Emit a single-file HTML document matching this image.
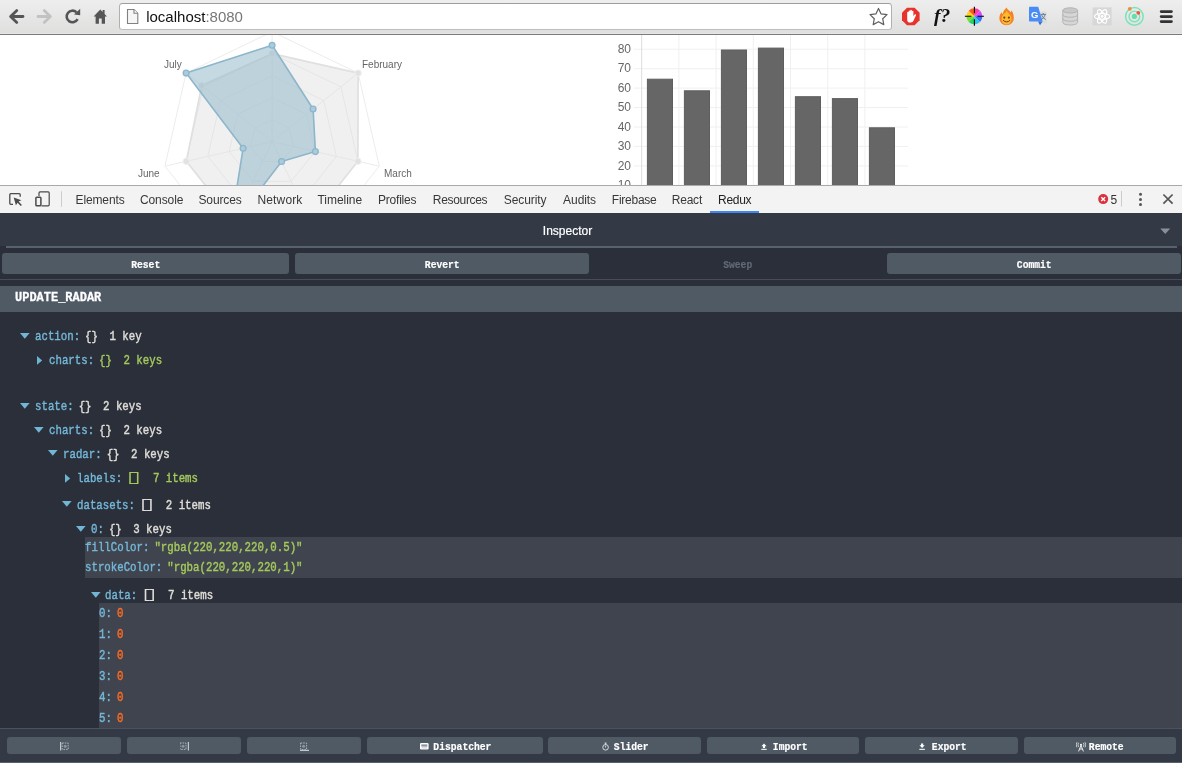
<!DOCTYPE html>
<html lang="en">
<head>
<meta charset="utf-8">
<title>localhost:8080</title>
<style>
html,body{margin:0;padding:0;}
body{width:1182px;height:763px;overflow:hidden;background:#fff;position:relative;font-family:"Liberation Sans",sans-serif;}
.abs{position:absolute;}
#tbg{position:absolute;left:0;top:0;width:1182px;height:33px;background:linear-gradient(#eeeeee,#dfdfde);border-bottom:1px solid #e6e6e6;box-shadow:0 1px 0 #7b7b7b;}
#toolbar{position:absolute;left:0;top:0;width:1182px;height:34px;will-change:transform;}
#urlbox{position:absolute;left:119px;top:3px;width:771px;height:25px;border:1px solid #b0b0b0;border-top-color:#9e9e9e;border-bottom-color:#bdbdbd;border-radius:3.5px;background:#fff;box-sizing:content-box;}
#url{position:absolute;left:146.2px;top:8px;font-size:15px;line-height:18px;color:#111;white-space:nowrap;}
#url span{color:#777;}
#page{position:absolute;left:0;top:35px;width:1182px;height:150px;overflow:hidden;will-change:transform;}
#dbg{position:absolute;left:0;top:185px;width:1182px;height:27px;background:#f3f3f3;border-top:1px solid #a9a9a9;}
#dtbar{position:absolute;left:0;top:186px;width:1182px;height:27px;will-change:transform;}
#dtbar .tab{position:absolute;top:7px;font-size:12px;line-height:14px;color:#383838;white-space:nowrap;}
#dtbar .tab.sel{color:#222;}
#redux{position:absolute;left:0;top:213px;width:1182px;height:550px;overflow:hidden;will-change:transform;}
#rbg{position:absolute;left:0;top:213px;width:1182px;height:550px;background:#2a2f3a;}
.mono{font-family:"Liberation Mono",monospace;white-space:pre;}
#insp{position:absolute;left:0;top:0;width:1182px;height:33px;background:#333a45;}
#insp .ttl{position:absolute;left:0;width:1135px;top:10.6px;text-align:center;font-size:12px;line-height:14px;color:#fff;-webkit-text-stroke:0.2px;}
#insp .ul{position:absolute;left:6px;top:33.2px;width:1171px;height:1.6px;background:#58616e;}
.btn{position:absolute;background:#4f5a65;border-radius:3px;text-align:center;color:#fff;overflow:hidden;}
.btn .t{-webkit-text-stroke:0.2px;top:-0.8px;display:inline-block;font-family:"Liberation Mono",monospace;font-weight:bold;white-space:pre;transform-origin:50% 50%;}
#hdr{position:absolute;left:0;top:73px;width:1182px;height:26px;background:#4f5a65;}
#hdr .t{position:absolute;left:14.6px;top:2.6px;font-family:"Liberation Mono",monospace;font-weight:bold;font-size:13.4px;line-height:18px;color:#fff;transform:scaleX(0.895);-webkit-text-stroke:0.3px;transform-origin:0 0;white-space:pre;}
.row{position:absolute;height:18px;line-height:18px;font-family:"Liberation Mono",monospace;font-size:13px;white-space:pre;transform:scaleX(0.8256);transform-origin:0 0;color:#e8e6df;-webkit-text-stroke:0.42px;}
.k{color:#75b8d8;}
.g{color:#a5ca5c;}
.o{color:#fc6d24;}
.w{color:#e0ded8;}
.sp{word-spacing:-1.75px;}
.sq{display:inline-block;font-size:12px;line-height:12px;vertical-align:1px;letter-spacing:-3.18px;margin-left:1.8px;margin-right:7.56px;transform:scaleX(1.76);-webkit-text-stroke:0;}
.hl{position:absolute;background:#40444f;}
#bot{position:absolute;left:0;top:515px;width:1182px;height:35px;background:#343a45;border-top:1px solid #4b5360;box-sizing:border-box;}
</style>
</head>
<body>
<div id="tbg"></div>
<div id="dbg"></div>
<div id="rbg"></div>
<div id="toolbar">
<svg class="abs" style="left:0;top:0" width="1182" height="33" viewBox="0 0 1182 33">
  <!-- back -->
  <path d="M23 16.5H11.5M16.8 10.6L10.6 16.5L16.8 22.4" fill="none" stroke="#555" stroke-width="2.8" stroke-linecap="round" stroke-linejoin="round"/>
  <!-- forward -->
  <path d="M38 16.5H49.5M44.2 10.6L50.4 16.5L44.2 22.4" fill="none" stroke="#c2c2c2" stroke-width="2.8" stroke-linecap="round" stroke-linejoin="round"/>
  <!-- reload -->
  <path d="M77.6 19.2A5.8 5.8 0 1 1 76.4 12.2" fill="none" stroke="#555" stroke-width="2.6"/>
  <path d="M74 14.6L80.2 15.2L80.2 8.8Z" fill="#555"/>
  <!-- home -->
  <path d="M100.3 9.6L93.6 16.6H95.6V23.8H98.9V18.6H101.7V23.8H105V16.6H107L104.6 14.1V10H102.6V12Z" fill="#555"/>
</svg>
<div id="urlbox"></div>
<svg class="abs" style="left:126px;top:8px" width="14" height="17" viewBox="0 0 14 17">
  <path d="M1.5 1.5H8L11.8 5.3V15.5H1.5Z" fill="#f6f6f6" stroke="#808080" stroke-width="1.1"/>
  <path d="M8 1.5V5.3H11.8" fill="#fff" stroke="#808080" stroke-width="1.1"/>
</svg>
<div id="url">localhost<span>:8080</span></div>
<svg class="abs" style="left:860px;top:0" width="322" height="33" viewBox="860 0 322 33">
  <!-- star -->
  <path d="M878.5 8.4L881.1 13.9L887 14.6L882.7 18.7L883.8 24.6L878.5 21.7L873.2 24.6L874.3 18.7L870 14.6L875.9 13.9Z" fill="#fff" stroke="#5e5e5e" stroke-width="1.2" stroke-linejoin="round"/>
  <!-- adblock -->
  <path d="M907 7.8H914.6L919.6 12.8V20.2L914.6 25.2H907L902 20.2V12.8Z" fill="#e8332c"/>
  <path d="M907.2 18.5V12.6Q907.2 11.8 908 11.8Q908.7 11.8 908.7 12.6V11.2Q908.7 10.4 909.5 10.4Q910.3 10.4 910.3 11.2V10.6Q910.3 9.8 911.1 9.8Q911.9 9.8 911.9 10.6V11.4Q911.9 10.7 912.7 10.7Q913.4 10.7 913.4 11.5V16.2L914.6 14.6Q915.3 13.9 915.9 14.5Q916.3 15 915.9 15.6L913.6 20.6Q912.9 22.6 910.8 22.6H910Q907.2 22.6 907.2 19.8Z" fill="#fff"/>
  <!-- f? -->
  <text x="934" y="21.6" font-family="Liberation Serif,serif" font-style="italic" font-weight="bold" font-size="19.5" fill="#111">f?</text>
  <!-- color wheel -->
  <g transform="translate(974.4 16.3)">
    <path d="M0 0L0 -8A8 8 0 0 1 5.66 -5.66Z" fill="#ff3aa0"/>
    <path d="M0 0L5.66 -5.66A8 8 0 0 1 8 0Z" fill="#d24cff"/>
    <path d="M0 0L8 0A8 8 0 0 1 5.66 5.66Z" fill="#3b6cff"/>
    <path d="M0 0L5.66 5.66A8 8 0 0 1 0 8Z" fill="#29c4e8"/>
    <path d="M0 0L0 8A8 8 0 0 1 -5.66 5.66Z" fill="#21d56a"/>
    <path d="M0 0L-5.66 5.66A8 8 0 0 1 -8 0Z" fill="#7be021"/>
    <path d="M0 0L-8 0A8 8 0 0 1 -5.66 -5.66Z" fill="#ffd21e"/>
    <path d="M0 0L-5.66 -5.66A8 8 0 0 1 0 -8Z" fill="#ff5a1e"/>
    <path d="M-9.5 0H-3M3 0H9.5M0 -9.5V-3M0 3V9.5" stroke="#000" stroke-width="1.1"/>
  </g>
  <!-- hola -->
  <path d="M1006.6 7.4C1007.6 10 1010 10.6 1010.6 12.4C1011.4 11.6 1011.4 10.8 1011.2 10C1013 12 1013.8 15 1013.8 18C1013.8 22.2 1010.6 25.2 1006.6 25.2C1002.6 25.2 999.4 22.2 999.4 18C999.4 15.4 1000.4 13.4 1001.8 12C1001.8 13 1002.2 13.8 1002.8 14.2C1002.8 11.4 1004.8 9.4 1006.6 7.4Z" fill="#f58220"/>
  <path d="M1006.6 10.5C1007.2 12.4 1009 13 1009.4 14.2C1011.4 16 1012 19 1011 21.4C1010.2 23.4 1008.4 24.4 1006.6 24.4C1004 24.4 1001.6 22.4 1001.6 19C1001.6 16.2 1003.6 14.6 1004.2 13.6C1005.2 13 1006.2 12 1006.6 10.5Z" fill="#fdb933"/>
  <circle cx="1004.3" cy="17.6" r="1.1" fill="#7a3b0a"/><circle cx="1008.9" cy="17.6" r="1.1" fill="#7a3b0a"/>
  <path d="M1003 20.2Q1006.6 23.6 1010.2 20.2" fill="none" stroke="#7a3b0a" stroke-width="1"/>
  <!-- google translate -->
  <path d="M1036 11.5H1045.8Q1046.6 11.5 1046.6 12.3V22.5Q1046.6 23.3 1045.8 23.3H1040Z" fill="#dcdcdc"/>
  <path d="M1029.8 6.8H1038.2L1042.6 21.6H1029.8Q1029 21.6 1029 20.8V7.6Q1029 6.8 1029.8 6.8Z" fill="#4a8cf5"/>
  <path d="M1038 21.6H1042.6L1040 25.2Z" fill="#3a6fd0"/>
  <text x="1031" y="18" font-family="Liberation Sans,sans-serif" font-weight="bold" font-size="9.5" fill="#fff">G</text>
  <path d="M1040.6 14.4H1046M1043.3 13V14.4M1041.4 14.6Q1042.4 18 1045.8 19.6M1045.2 14.6Q1044.2 18 1041 19.8" fill="none" stroke="#5b7a9a" stroke-width="0.9"/>
  <!-- database -->
  <g fill="#d6d6d6" stroke="#b3b3b3" stroke-width="1">
    <path d="M1062.8 10.4V22.4C1062.8 24 1066 25 1070.2 25C1074.4 25 1077.6 24 1077.6 22.4V10.4Z"/>
    <ellipse cx="1070.2" cy="10.4" rx="7.4" ry="2.6" fill="#c8c8c8"/>
    <path d="M1062.8 14.6C1062.8 16.2 1066 17.2 1070.2 17.2C1074.4 17.2 1077.6 16.2 1077.6 14.6M1062.8 18.6C1062.8 20.2 1066 21.2 1070.2 21.2C1074.4 21.2 1077.6 20.2 1077.6 18.6" fill="none"/>
  </g>
  <!-- react (disabled) -->
  <rect x="1092.6" y="7.4" width="19" height="18" fill="#d7d7d7"/>
  <g transform="translate(1102.1 16.4)" fill="none" stroke="#fff" stroke-width="1.1">
    <ellipse rx="7.6" ry="2.9"/>
    <ellipse rx="7.6" ry="2.9" transform="rotate(60)"/>
    <ellipse rx="7.6" ry="2.9" transform="rotate(120)"/>
    <circle r="1.4" fill="#fff" stroke="none"/>
  </g>
  <!-- redux devtools -->
  <g transform="translate(1134.4 16.4)">
    <circle r="8.8" fill="none" stroke="#7be3ba" stroke-width="1.5"/>
    <circle r="5.3" fill="none" stroke="#7be3ba" stroke-width="1.4"/>
    <circle r="2.6" fill="#63dfae"/>
    <circle cx="-4.6" cy="-7.6" r="1.9" fill="#ef8b3f"/>
    <circle cx="3.9" cy="-3.6" r="1.9" fill="#f0553b"/>
  </g>
  <!-- menu -->
  <path d="M1161.2 11.6H1171.4M1161.2 16.6H1171.4M1161.2 21.6H1171.4" stroke="#333" stroke-width="2.9" stroke-linecap="round"/>
</svg>
</div>
<div id="page">
<svg class="abs" style="left:0;top:0" width="1182" height="150" viewBox="0 35 1182 150">
<polygon points="272.1,119.7 289.3,128.0 293.5,146.6 281.6,161.5 262.6,161.5 250.7,146.6 254.9,128.0" fill="none" stroke="#ececec" stroke-width="1"/>
<polygon points="272.1,97.7 306.5,114.3 315.0,151.5 291.2,181.3 253.0,181.3 229.2,151.5 237.7,114.3" fill="none" stroke="#ececec" stroke-width="1"/>
<polygon points="272.1,75.7 323.7,100.5 336.4,156.4 300.7,201.2 243.5,201.2 207.8,156.4 220.5,100.5" fill="none" stroke="#ececec" stroke-width="1"/>
<polygon points="272.1,53.7 340.9,86.8 357.9,161.3 310.3,221.0 233.9,221.0 186.3,161.3 203.3,86.8" fill="none" stroke="#ececec" stroke-width="1"/>
<polygon points="272.1,31.7 358.1,73.1 379.3,166.2 319.8,240.8 224.4,240.8 164.9,166.2 186.1,73.1" fill="none" stroke="#ececec" stroke-width="1"/>
<line x1="272.1" y1="141.7" x2="272.1" y2="31.7" stroke="#ececec" stroke-width="1"/>
<line x1="272.1" y1="141.7" x2="358.1" y2="73.1" stroke="#ececec" stroke-width="1"/>
<line x1="272.1" y1="141.7" x2="379.3" y2="166.2" stroke="#ececec" stroke-width="1"/>
<line x1="272.1" y1="141.7" x2="319.8" y2="240.8" stroke="#ececec" stroke-width="1"/>
<line x1="272.1" y1="141.7" x2="224.4" y2="240.8" stroke="#ececec" stroke-width="1"/>
<line x1="272.1" y1="141.7" x2="164.9" y2="166.2" stroke="#ececec" stroke-width="1"/>
<line x1="272.1" y1="141.7" x2="186.1" y2="73.1" stroke="#ececec" stroke-width="1"/>
<polygon points="272.1,53.7 358.1,73.1 357.9,161.3 310.3,221.0 233.9,221.0 186.3,161.3 201.7,85.6" fill="rgba(220,220,220,0.42)" stroke="rgb(224,224,224)" stroke-width="1.7" stroke-linejoin="round"/>
<circle cx="272.1" cy="53.7" r="3.2" fill="rgb(226,226,226)" stroke="#efefef" stroke-width="1"/>
<circle cx="358.1" cy="73.1" r="3.2" fill="rgb(226,226,226)" stroke="#efefef" stroke-width="1"/>
<circle cx="357.9" cy="161.3" r="3.2" fill="rgb(226,226,226)" stroke="#efefef" stroke-width="1"/>
<circle cx="310.3" cy="221.0" r="3.2" fill="rgb(226,226,226)" stroke="#efefef" stroke-width="1"/>
<circle cx="233.9" cy="221.0" r="3.2" fill="rgb(226,226,226)" stroke="#efefef" stroke-width="1"/>
<circle cx="186.3" cy="161.3" r="3.2" fill="rgb(226,226,226)" stroke="#efefef" stroke-width="1"/>
<circle cx="201.7" cy="85.6" r="3.2" fill="rgb(226,226,226)" stroke="#efefef" stroke-width="1"/>
<polygon points="272.1,45.2 313.1,109.0 315.4,151.6 281.6,161.5 230.4,228.2 243.1,148.3 186.1,73.1" fill="rgba(151,187,205,0.56)" stroke="rgb(141,182,202)" stroke-width="1.6" stroke-linejoin="round"/>
<circle cx="272.1" cy="45.2" r="2.9" fill="rgb(170,203,221)" stroke="rgb(141,182,202)" stroke-width="1.3"/>
<circle cx="313.1" cy="109.0" r="2.9" fill="rgb(170,203,221)" stroke="rgb(141,182,202)" stroke-width="1.3"/>
<circle cx="315.4" cy="151.6" r="2.9" fill="rgb(170,203,221)" stroke="rgb(141,182,202)" stroke-width="1.3"/>
<circle cx="281.6" cy="161.5" r="2.9" fill="rgb(170,203,221)" stroke="rgb(141,182,202)" stroke-width="1.3"/>
<circle cx="230.4" cy="228.2" r="2.9" fill="rgb(170,203,221)" stroke="rgb(141,182,202)" stroke-width="1.3"/>
<circle cx="243.1" cy="148.3" r="2.9" fill="rgb(170,203,221)" stroke="rgb(141,182,202)" stroke-width="1.3"/>
<circle cx="186.1" cy="73.1" r="2.9" fill="rgb(170,203,221)" stroke="rgb(141,182,202)" stroke-width="1.3"/>
<text x="164" y="68" font-family="Liberation Sans,sans-serif" font-size="10" fill="#666">July</text>
<text x="362" y="68" font-family="Liberation Sans,sans-serif" font-size="10" fill="#666">February</text>
<text x="138" y="177" font-family="Liberation Sans,sans-serif" font-size="10" fill="#666">June</text>
<text x="384" y="177" font-family="Liberation Sans,sans-serif" font-size="10" fill="#666">March</text>
<line x1="634" y1="185.3" x2="908" y2="185.3" stroke="#f0f0f0" stroke-width="1"/>
<text x="631" y="189.1" text-anchor="end" font-family="Liberation Sans,sans-serif" font-size="12" fill="#666">10</text>
<line x1="634" y1="165.9" x2="908" y2="165.9" stroke="#f0f0f0" stroke-width="1"/>
<text x="631" y="169.6" text-anchor="end" font-family="Liberation Sans,sans-serif" font-size="12" fill="#666">20</text>
<line x1="634" y1="146.4" x2="908" y2="146.4" stroke="#f0f0f0" stroke-width="1"/>
<text x="631" y="150.2" text-anchor="end" font-family="Liberation Sans,sans-serif" font-size="12" fill="#666">30</text>
<line x1="634" y1="127.0" x2="908" y2="127.0" stroke="#f0f0f0" stroke-width="1"/>
<text x="631" y="130.7" text-anchor="end" font-family="Liberation Sans,sans-serif" font-size="12" fill="#666">40</text>
<line x1="634" y1="107.5" x2="908" y2="107.5" stroke="#f0f0f0" stroke-width="1"/>
<text x="631" y="111.2" text-anchor="end" font-family="Liberation Sans,sans-serif" font-size="12" fill="#666">50</text>
<line x1="634" y1="88.1" x2="908" y2="88.1" stroke="#f0f0f0" stroke-width="1"/>
<text x="631" y="91.8" text-anchor="end" font-family="Liberation Sans,sans-serif" font-size="12" fill="#666">60</text>
<line x1="634" y1="68.7" x2="908" y2="68.7" stroke="#f0f0f0" stroke-width="1"/>
<text x="631" y="72.4" text-anchor="end" font-family="Liberation Sans,sans-serif" font-size="12" fill="#666">70</text>
<line x1="634" y1="49.2" x2="908" y2="49.2" stroke="#f0f0f0" stroke-width="1"/>
<text x="631" y="52.9" text-anchor="end" font-family="Liberation Sans,sans-serif" font-size="12" fill="#666">80</text>
<line x1="641.7" y1="34" x2="641.7" y2="185" stroke="#dcdcdc" stroke-width="1"/>
<line x1="678.9" y1="34" x2="678.9" y2="185" stroke="#f0f0f0" stroke-width="1"/>
<line x1="716.1" y1="34" x2="716.1" y2="185" stroke="#f0f0f0" stroke-width="1"/>
<line x1="753.3" y1="34" x2="753.3" y2="185" stroke="#f0f0f0" stroke-width="1"/>
<line x1="790.5" y1="34" x2="790.5" y2="185" stroke="#f0f0f0" stroke-width="1"/>
<line x1="827.7" y1="34" x2="827.7" y2="185" stroke="#f0f0f0" stroke-width="1"/>
<line x1="864.9" y1="34" x2="864.9" y2="185" stroke="#f0f0f0" stroke-width="1"/>
<rect x="647.4" y="79.2" width="25.1" height="110.8" fill="#666" stroke="#5e5e5e" stroke-width="1"/>
<rect x="684.4" y="90.8" width="25.1" height="99.2" fill="#666" stroke="#5e5e5e" stroke-width="1"/>
<rect x="721.4" y="50.0" width="25.1" height="140.0" fill="#666" stroke="#5e5e5e" stroke-width="1"/>
<rect x="758.4" y="48.1" width="25.1" height="141.9" fill="#666" stroke="#5e5e5e" stroke-width="1"/>
<rect x="795.4" y="96.7" width="25.1" height="93.3" fill="#666" stroke="#5e5e5e" stroke-width="1"/>
<rect x="832.4" y="98.6" width="25.1" height="91.4" fill="#666" stroke="#5e5e5e" stroke-width="1"/>
<rect x="869.4" y="127.8" width="25.1" height="62.2" fill="#666" stroke="#5e5e5e" stroke-width="1"/>
</svg>
</div>
<div id="dtbar">
<svg class="abs" style="left:0;top:0" width="70" height="27" viewBox="0 186 70 27">
<path d="M13 204.3H10.8Q9.8 204.3 9.8 203.3V194.7Q9.8 193.7 10.8 193.7H19.2Q20.2 193.7 20.2 194.7V196.8" fill="none" stroke="#4a4a4a" stroke-width="1.3"/>
<path d="M13.7 197.4L21.4 200.2L18.6 201.6L21.9 205L20.8 206L17.6 202.7L15.9 205.2Z" fill="#4a4a4a"/>
<path d="M39 196V192.9Q39 191.9 40 191.9H48.2Q49.2 191.9 49.2 192.9V204.8Q49.2 205.8 48.2 205.8H41.6" fill="none" stroke="#4a4a4a" stroke-width="1.2"/>
<rect x="35.9" y="197.2" width="5" height="8.6" rx="0.9" fill="#f3f3f3" stroke="#4a4a4a" stroke-width="1.5"/>
<path d="M61.5 191.3V206.8" stroke="#ccc" stroke-width="1"/>
</svg>
<div class="tab" style="left:75.5px;letter-spacing:-0.12px">Elements</div>
<div class="tab" style="left:139.9px;letter-spacing:-0.07px">Console</div>
<div class="tab" style="left:198.5px;letter-spacing:-0.14px">Sources</div>
<div class="tab" style="left:257.5px;letter-spacing:0.14px">Network</div>
<div class="tab" style="left:317.5px;letter-spacing:-0.05px">Timeline</div>
<div class="tab" style="left:378.0px;letter-spacing:-0.21px">Profiles</div>
<div class="tab" style="left:432.8px;letter-spacing:-0.32px">Resources</div>
<div class="tab" style="left:503.8px;letter-spacing:-0.09px">Security</div>
<div class="tab" style="left:563.1px;letter-spacing:-0.07px">Audits</div>
<div class="tab" style="left:611.8px;letter-spacing:-0.25px">Firebase</div>
<div class="tab" style="left:671.7px;letter-spacing:-0.20px">React</div>
<div class="tab sel" style="left:718.1px;letter-spacing:-0.30px">Redux</div>
<div class="abs" style="left:710px;top:25px;width:49px;height:2px;background:#4286f4"></div>
<svg class="abs" style="left:1082px;top:0" width="100" height="27" viewBox="1082 186.5 100 27">
<circle cx="1103.2" cy="199.6" r="5" fill="#d93340"/>
<path d="M1101.3 197.7L1105.1 201.5M1105.1 197.7L1101.3 201.5" stroke="#fff" stroke-width="1.4"/>
<text x="1110.4" y="204" font-family="Liberation Sans,sans-serif" font-size="12" fill="#333">5</text>
<path d="M1121.5 191.5V207" stroke="#ccc" stroke-width="1"/>
<circle cx="1140.5" cy="194.8" r="1.5" fill="#555"/><circle cx="1140.5" cy="199.9" r="1.5" fill="#555"/><circle cx="1140.5" cy="205" r="1.5" fill="#555"/>
<path d="M1163.4 195L1172.6 204.2M1172.6 195L1163.4 204.2" stroke="#555" stroke-width="1.7"/>
</svg>
</div>
<div id="redux">
<div id="insp"><div class="ttl">Inspector</div><div class="ul"></div><svg class="abs" style="left:1160px;top:15px" width="11" height="7" viewBox="0 0 11 7"><path d="M0.3 0.5H10.2L5.25 6Z" fill="#8a9099"/></svg></div>
<div class="btn" style="left:2px;top:40px;width:287px;height:21px;line-height:21px;background:#4f5a65;color:#fff"><span class="t" style="font-size:11.8px;transform:scaleX(0.82);position:relative;left:0px">Reset</span></div>
<div class="btn" style="left:295px;top:40px;width:293.5px;height:21px;line-height:21px;background:#4f5a65;color:#fff"><span class="t" style="font-size:11.8px;transform:scaleX(0.82);position:relative;left:0px">Revert</span></div>
<div class="btn" style="left:592px;top:40px;width:291px;height:21px;line-height:21px;background:transparent;color:#626a76"><span class="t" style="font-size:11.8px;transform:scaleX(0.82);position:relative;left:0px">Sweep</span></div>
<div class="btn" style="left:887px;top:40px;width:294px;height:21px;line-height:21px;background:#4f5a65;color:#fff"><span class="t" style="font-size:11.8px;transform:scaleX(0.82);position:relative;left:0px">Commit</span></div>
<div class="abs" style="left:0;top:66px;width:1182px;height:1px;background:#454d59"></div>
<div id="hdr"><div class="t">UPDATE_RADAR</div></div>
<div class="hl" style="left:85px;top:323.9px;width:1097px;height:41.6px"></div>
<div class="hl" style="left:99px;top:390px;width:1083px;height:125px"></div>
<div class="row" style="left:34.6px;top:115px"><span class="k">action<span>:</span></span><span class="sp"> </span><span class="w">{}<span class="sp"> </span> 1 key</span></div>
<svg class="abs" style="left:20px;top:119.8px" width="10" height="6" viewBox="0 0 10 6"><path d="M0 0H9.6L4.8 5.8Z" fill="#72b6d6"/></svg>
<div class="row" style="left:48.7px;top:138.7px"><span class="k">charts<span>:</span></span><span class="sp"> </span><span class="g">{}<span class="sp"> </span> 2 keys</span></div>
<svg class="abs" style="left:36.7px;top:142.5px" width="6" height="9" viewBox="0 0 6 9"><path d="M0 0V8.8L5.2 4.4Z" fill="#6fb3d2"/></svg>
<div class="row" style="left:34.6px;top:184.9px"><span class="k">state<span>:</span></span><span class="sp"> </span><span class="w">{}<span class="sp"> </span> 2 keys</span></div>
<svg class="abs" style="left:20px;top:189.7px" width="10" height="6" viewBox="0 0 10 6"><path d="M0 0H9.6L4.8 5.8Z" fill="#72b6d6"/></svg>
<div class="row" style="left:48.7px;top:208.8px"><span class="k">charts<span>:</span></span><span class="sp"> </span><span class="w">{}<span class="sp"> </span> 2 keys</span></div>
<svg class="abs" style="left:34.1px;top:213.6px" width="10" height="6" viewBox="0 0 10 6"><path d="M0 0H9.6L4.8 5.8Z" fill="#72b6d6"/></svg>
<div class="row" style="left:62.8px;top:232.5px"><span class="k">radar<span>:</span></span><span class="sp"> </span><span class="w">{}<span class="sp"> </span> 2 keys</span></div>
<svg class="abs" style="left:48.2px;top:237.3px" width="10" height="6" viewBox="0 0 10 6"><path d="M0 0H9.6L4.8 5.8Z" fill="#72b6d6"/></svg>
<div class="row" style="left:76.9px;top:256.9px"><span class="k">labels<span>:</span></span><span class="sp"> </span><span class="g"><span class="sq">[]</span><span class="sp"> </span> 7 items</span></div>
<svg class="abs" style="left:64.9px;top:260.7px" width="6" height="9" viewBox="0 0 6 9"><path d="M0 0V8.8L5.2 4.4Z" fill="#6fb3d2"/></svg>
<div class="row" style="left:76.9px;top:283.6px"><span class="k">datasets<span>:</span></span><span class="sp"> </span><span class="w"><span class="sq">[]</span><span class="sp"> </span> 2 items</span></div>
<svg class="abs" style="left:62.3px;top:288.4px" width="10" height="6" viewBox="0 0 10 6"><path d="M0 0H9.6L4.8 5.8Z" fill="#72b6d6"/></svg>
<div class="row" style="left:91px;top:307.7px"><span class="k">0<span>:</span></span><span class="sp"> </span><span class="w">{}<span class="sp"> </span> 3 keys</span></div>
<svg class="abs" style="left:76.4px;top:312.5px" width="10" height="6" viewBox="0 0 10 6"><path d="M0 0H9.6L4.8 5.8Z" fill="#72b6d6"/></svg>
<div class="row" style="left:85.1px;top:325.5px"><span class="k">fillColor:</span><span class="sp"> </span><span class="g">"rgba(220,220,220,0.5)"</span></div>
<div class="row" style="left:85.1px;top:346.3px"><span class="k">strokeColor:</span><span class="sp"> </span><span class="g">"rgba(220,220,220,1)"</span></div>
<div class="row" style="left:105.1px;top:373.7px"><span class="k">data<span>:</span></span><span class="sp"> </span><span class="w"><span class="sq">[]</span><span class="sp"> </span> 7 items</span></div>
<svg class="abs" style="left:90.5px;top:378.5px" width="10" height="6" viewBox="0 0 10 6"><path d="M0 0H9.6L4.8 5.8Z" fill="#72b6d6"/></svg>
<div class="row" style="left:99px;top:392.4px"><span class="k">0:</span><span class="sp"> </span><span class="o">0</span></div>
<div class="row" style="left:99px;top:413.3px"><span class="k">1:</span><span class="sp"> </span><span class="o">0</span></div>
<div class="row" style="left:99px;top:434.2px"><span class="k">2:</span><span class="sp"> </span><span class="o">0</span></div>
<div class="row" style="left:99px;top:455.1px"><span class="k">3:</span><span class="sp"> </span><span class="o">0</span></div>
<div class="row" style="left:99px;top:476px"><span class="k">4:</span><span class="sp"> </span><span class="o">0</span></div>
<div class="row" style="left:99px;top:496.9px"><span class="k">5:</span><span class="sp"> </span><span class="o">0</span></div>
<div id="bot">
<div class="btn" style="left:7px;top:8px;width:113.6px;height:17px;line-height:17px;background:#4f5a65;color:#fff"><span class="t" style="font-size:11.8px;transform:scaleX(0.82);position:relative;left:0px"></span><svg style="position:absolute;left:50%;margin-left:-4px;top:5.4px" width="9" height="9" viewBox="0 0 9 9"><path d="M0.6 0V8.4" stroke="#c3c7cc" stroke-width="1.2"/><rect x="2.2" y="1" width="6" height="6.4" fill="none" stroke="#aeb3ba" stroke-width="1" stroke-dasharray="1.6 1"/><circle cx="5.2" cy="4.2" r="1.5" fill="#8d949d"/></svg></div>
<div class="btn" style="left:127.4px;top:8px;width:113.4px;height:17px;line-height:17px;background:#4f5a65;color:#fff"><span class="t" style="font-size:11.8px;transform:scaleX(0.82);position:relative;left:0px"></span><svg style="position:absolute;left:50%;margin-left:-4px;top:5.4px" width="9" height="9" viewBox="0 0 9 9"><path d="M8.4 0V8.4" stroke="#c3c7cc" stroke-width="1.2"/><rect x="0" y="1" width="6" height="6.4" fill="none" stroke="#aeb3ba" stroke-width="1" stroke-dasharray="1.6 1"/><circle cx="3" cy="4.2" r="1.5" fill="#8d949d"/></svg></div>
<div class="btn" style="left:247.2px;top:8px;width:113.6px;height:17px;line-height:17px;background:#4f5a65;color:#fff"><span class="t" style="font-size:11.8px;transform:scaleX(0.82);position:relative;left:0px"></span><svg style="position:absolute;left:50%;margin-left:-4px;top:5.4px" width="9" height="9" viewBox="0 0 9 9"><path d="M0 8.4H9" stroke="#c3c7cc" stroke-width="1.2"/><rect x="0.6" y="1" width="6" height="6.4" fill="none" stroke="#aeb3ba" stroke-width="1" stroke-dasharray="1.6 1"/><circle cx="3.6" cy="4.2" r="1.5" fill="#8d949d"/></svg></div>
<div class="btn" style="left:367.2px;top:8px;width:175.6px;height:17px;line-height:17px;background:#4f5a65;color:#fff"><span class="t" style="font-size:11.8px;transform:scaleX(0.82);position:relative;left:7px">Dispatcher</span><svg style="position:absolute;left:52.8px;top:6.4px" width="9" height="7" viewBox="0 0 9 7"><rect x="0" y="0" width="8.6" height="6.4" rx="1.2" fill="#fff"/><rect x="1.3" y="1.4" width="6" height="2.2" fill="#8993a0"/><path d="M1.6 4.9H7" stroke="#b8bfc8" stroke-width="0.8"/></svg></div>
<div class="btn" style="left:548.4px;top:8px;width:153px;height:17px;line-height:17px;background:#4f5a65;color:#fff"><span class="t" style="font-size:11.8px;transform:scaleX(0.82);position:relative;left:6.3px">Slider</span><svg style="position:absolute;left:53.4px;top:5px" width="7.2" height="9.2" viewBox="0 0 8 10"><circle cx="4" cy="5.8" r="3.1" fill="none" stroke="#e4e7ea" stroke-width="1"/><path d="M2.9 1.1H5.1M4 1.1V2.8M4 4V6" stroke="#e4e7ea" stroke-width="1"/></svg></div>
<div class="btn" style="left:707.2px;top:8px;width:151.6px;height:17px;line-height:17px;background:#4f5a65;color:#fff"><span class="t" style="font-size:11.8px;transform:scaleX(0.82);position:relative;left:7px">Import</span><svg style="position:absolute;left:54px;top:5.6px" width="6" height="7.4" viewBox="0 0 8 9"><path d="M4 0.4L7.4 4H5.4V6.2H2.6V4H0.6Z" fill="#fff"/><path d="M0.4 8H7.6" stroke="#e0e3e7" stroke-width="1.5"/></svg></div>
<div class="btn" style="left:865px;top:8px;width:153px;height:17px;line-height:17px;background:#4f5a65;color:#fff"><span class="t" style="font-size:11.8px;transform:scaleX(0.82);position:relative;left:7.3px">Export</span><svg style="position:absolute;left:54px;top:5.6px" width="6.2" height="7.2" viewBox="0 0 8 9"><path d="M4 6.2L7.4 2.8H5.4V0.4H2.6V2.8H0.6Z" fill="#fff"/><path d="M0.4 8H7.6" stroke="#e0e3e7" stroke-width="1.5"/></svg></div>
<div class="btn" style="left:1024.3px;top:8px;width:151.7px;height:17px;line-height:17px;background:#4f5a65;color:#fff"><span class="t" style="font-size:11.8px;transform:scaleX(0.82);position:relative;left:6.6px">Remote</span><svg style="position:absolute;left:52px;top:5px" width="10" height="10" viewBox="0 0 10 10"><path d="M5 3.4L2.6 9.4M5 3.4L7.4 9.4M3.6 7H6.4" stroke="#fff" stroke-width="0.9" fill="none"/><circle cx="5" cy="2.8" r="1" fill="#fff"/><path d="M2.6 0.8Q1.4 2.8 2.6 4.8M1 0.2Q-0.6 2.8 1 5.4M7.4 0.8Q8.6 2.8 7.4 4.8M9 0.2Q10.6 2.8 9 5.4" stroke="#fff" stroke-width="0.7" fill="none"/></svg></div>
<div class="abs" style="left:0;top:32.5px;width:1182px;height:1.5px;background:#55606b"></div>
</div>
</div>
</body>
</html>
